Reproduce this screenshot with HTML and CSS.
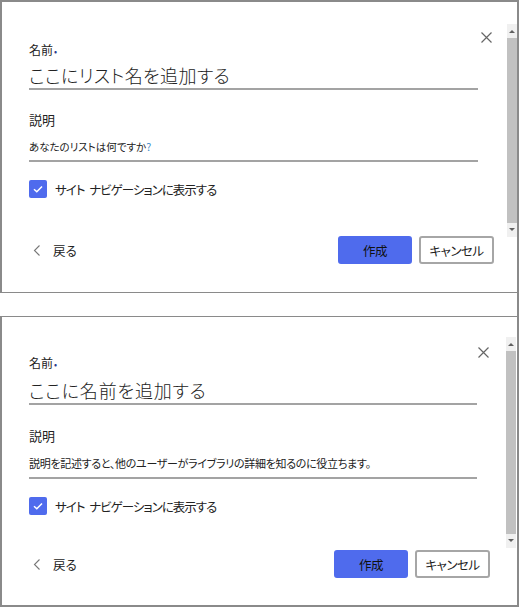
FILE: index.html
```html
<!DOCTYPE html>
<html lang="ja">

<head>
    <meta charset="utf-8">
    <meta name="viewport" content="width=device-width, initial-scale=1.0">
    <title>リストの作成</title>
    <link rel="stylesheet" href="styles.css">
</head>

<body>

    <div class="page">

        <section class="panel">
            <div class="form">
                <button class="luk" aria-label="閉じる">
                    <svg width="11" height="11" viewBox="0 0 11 11"><path d="M0.5 0.5L10.5 10.5M10.5 0.5L0.5 10.5" stroke="#666" stroke-width="1.2" fill="none"/></svg>
                </button>
                <div class="label">名前<span class="req">•</span></div>
                <div class="field title">ここにリスト名を追加する</div>
                <div class="label big">説明</div>
                <div class="field desc">あなたのリストは何ですか<span class="blue">?</span></div>
                <label class="check">
                    <span class="box">
                        <svg width="12" height="10" viewBox="0 0 12 10"><path d="M2 5.2L4.8 7.8L10 2.4" stroke="#fff" stroke-width="1.5" fill="none"/></svg>
                    </span>
                    サイト ナビゲーションに表示する
                </label>
                <div class="footer">
                    <button class="tilbage">
                        <svg width="8" height="11" viewBox="0 0 8 11"><path d="M6.5 0.5L1.5 5.5L6.5 10.5" stroke="#777" stroke-width="1.1" fill="none"/></svg>
                        戻る
                    </button>
                    <div class="knapper">
                        <button class="btn primary">作成</button>
                        <button class="btn">キャンセル</button>
                    </div>
                </div>
            </div>
            <div class="scroll scroll1">
                <span class="pil op"></span>
                <span class="thumb"></span>
                <span class="pil ned"></span>
            </div>
        </section>

        <section class="panel panel2">
            <div class="form">
                <button class="luk" aria-label="閉じる">
                    <svg width="11" height="11" viewBox="0 0 11 11"><path d="M0.5 0.5L10.5 10.5M10.5 0.5L0.5 10.5" stroke="#666" stroke-width="1.2" fill="none"/></svg>
                </button>
                <div class="label">名前<span class="req">•</span></div>
                <div class="field title">ここに名前を追加する</div>
                <div class="label big">説明</div>
                <div class="field desc small">説明を記述すると、他のユーザーがライブラリの詳細を知るのに役立ちます。</div>
                <label class="check">
                    <span class="box">
                        <svg width="12" height="10" viewBox="0 0 12 10"><path d="M2 5.2L4.8 7.8L10 2.4" stroke="#fff" stroke-width="1.5" fill="none"/></svg>
                    </span>
                    サイト ナビゲーションに表示する
                </label>
                <div class="footer">
                    <button class="tilbage">
                        <svg width="8" height="11" viewBox="0 0 8 11"><path d="M6.5 0.5L1.5 5.5L6.5 10.5" stroke="#777" stroke-width="1.1" fill="none"/></svg>
                        戻る
                    </button>
                    <div class="knapper">
                        <button class="btn primary">作成</button>
                        <button class="btn">キャンセル</button>
                    </div>
                </div>
            </div>
            <div class="scroll scroll2">
                <span class="pil op"></span>
                <span class="thumb"></span>
                <span class="pil ned"></span>
            </div>
        </section>

    </div>

</body>

</html>
```

FILE: styles.css
```css
body {
    margin: 0;
    padding: 0;
    background-color: #fff;
    font-family: "Noto Sans CJK JP", "Noto Sans", sans-serif;
    font-feature-settings: "palt";
    color: #222;
}

button {
    font-family: inherit;
    font-feature-settings: "palt";
    background: none;
    border: none;
    padding: 0;
    color: inherit;
    cursor: pointer;
}

.page {
    width: 517px;
    border-right: 2px solid #8a8a8a;
}

.panel {
    display: flex;
    border-top: 2px solid #8a8a8a;
    border-left: 2px solid #8a8a8a;
    border-bottom: 1px solid #8a8a8a;
}

.panel2 {
    margin-top: 23px;
    border-top-width: 1px;
    border-bottom-width: 2px;
}

.form {
    position: relative;
    flex: 1;
    padding: 40px 13px 28px 27px;
}

.panel2 .form {
    padding-top: 38px;
    padding-right: 16px;
    padding-bottom: 27px;
}

.luk {
    position: absolute;
    top: 30px;
    right: 15px;
    width: 11px;
    height: 11px;
    display: flex;
}

.panel2 .luk {
    top: 30px;
    right: 17px;
}

.label {
    font-size: 12px;
    line-height: 16px;
    height: 16px;
}

.req {
    color: #2b3a8c;
    font-size: 9px;
    line-height: 0;
    margin-left: 1px;
}

.label.big {
    font-size: 13px;
    line-height: 18px;
    height: 18px;
    margin-top: 21px;
}

.panel2 .label.big {
    margin-top: 22px;
}

.field {
    margin-right: 16px;
    border-bottom: 2px solid #a3a3a3;
    white-space: nowrap;
}

.panel2 .field {
    margin-right: 13px;
}

.title {
    margin-top: 5px;
    font-size: 18px;
    line-height: 24px;
    height: 24px;
    font-weight: 300;
    letter-spacing: 0.4px;
    padding-bottom: 1px;
    color: #222;
}

.panel2 .title {
    margin-top: 7px;
    letter-spacing: 0.8px;
}

.desc {
    margin-top: 10px;
    font-size: 10.5px;
    line-height: 16px;
    height: 16px;
    padding-bottom: 5px;
}

.desc.small {
    font-size: 11px;
    letter-spacing: -0.3px;
    padding-bottom: 6px;
}

.blue {
    color: #3a86c8;
}

.check {
    display: flex;
    align-items: center;
    gap: 8px;
    margin-top: 18px;
    height: 18px;
    font-size: 12.5px;
    letter-spacing: -1px;
    word-spacing: 3px;
}

.box {
    width: 18px;
    height: 18px;
    border-radius: 2px;
    background-color: #4f6bed;
    display: flex;
    align-items: center;
    justify-content: center;
}

.footer {
    display: flex;
    justify-content: space-between;
    align-items: center;
    margin-top: 38px;
    height: 28px;
}

.panel2 .footer {
    margin-top: 35px;
}

.tilbage {
    display: flex;
    align-items: center;
    gap: 12px;
    font-size: 12.5px;
    padding-left: 4px;
}

.knapper {
    display: flex;
    gap: 7px;
}

.btn {
    box-sizing: border-box;
    width: 75px;
    height: 28px;
    border: 2px solid #a6a6a6;
    border-radius: 3px;
    font-size: 12.5px;
    letter-spacing: -0.5px;
    background-color: #fff;
}

.btn.primary {
    width: 74px;
    border-color: #4f6bed;
    background-color: #4f6bed;
    color: #111;
}

.scroll {
    align-self: flex-start;
    width: 10px;
    background-color: #f0f0f0;
    display: flex;
    flex-direction: column;
    align-items: center;
}

.scroll1 {
    margin-top: 22px;
    height: 213px;
}

.scroll2 {
    margin-top: 20px;
    height: 211px;
    margin-right: 1px;
}

.pil {
    width: 0;
    height: 0;
    border-left: 3px solid transparent;
    border-right: 3px solid transparent;
    margin: 6px 0 5px;
}

.op {
    border-bottom: 3px solid #606060;
}

.ned {
    border-top: 3px solid #606060;
    margin: 5px 0 6px;
}

.thumb {
    flex: 1;
    width: 10px;
    background-color: #c1c1c1;
}
```
